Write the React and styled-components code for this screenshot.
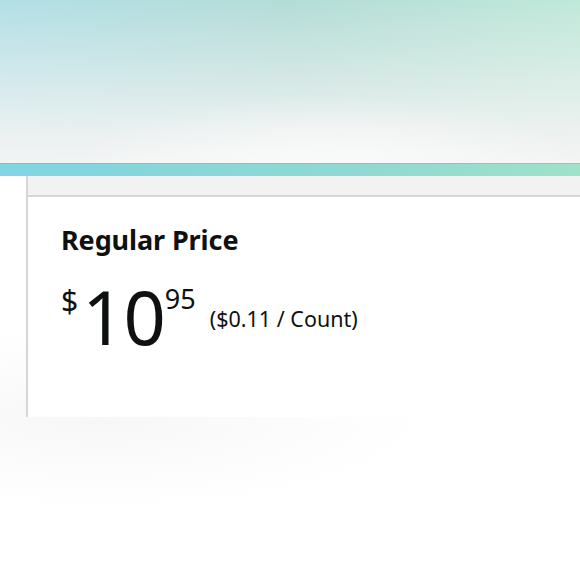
import styled, { createGlobalStyle } from "styled-components";

const Global = createGlobalStyle`
    html, body {
        margin: 0;
        padding: 0;
        background: #ffffff;
        font-family: "Noto Sans", "Open Sans", Arial, sans-serif;
    }
`;

const Page = styled.div`
    width: 580px;
    height: 580px;
    overflow: hidden;
    display: flex;
    flex-direction: column;
    background: radial-gradient(ellipse 330px 90px at 100px 418px, #f7f7f7 0%, #fcfcfc 60%, #ffffff 100%);
`;

const Hero = styled.div`
    height: 163px;
    flex-shrink: 0;
    background:
        radial-gradient(ellipse 260px 80px at 330px 175px, #fbfbfb 0%, rgba(251,251,251,0) 100%),
        linear-gradient(180deg, rgba(255,255,255,0) 0%, rgba(243,243,243,0.9) 85%, #f3f4f4 100%),
        linear-gradient(90deg, #b2dfe6 0%, #b4dcd7 50%, #c0e8d9 100%);
`;

const Band = styled.div`
    height: 13px;
    flex-shrink: 0;
    background: linear-gradient(90deg, #80d6e1 0%, #84d6dc 20%, #8fd9d3 60%, #9fe2ca 100%);
    box-shadow: inset 0 1px 0 rgba(90, 170, 170, 0.35);
`;

const Body = styled.div`
    display: flex;
    padding-left: 26px;
`;

const Card = styled.div`
    flex: 1;
    height: 241px;
    border-left: 2px solid #d6d6d6;
    background: #ffffff;
    display: flex;
    flex-direction: column;
`;

const CardTop = styled.div`
    height: 19px;
    background: #f2f2f2;
    border-bottom: 2px solid #d7d7d7;
`;

const Content = styled.div`
    padding: 26px 0 0 33px;
    color: #0f1111;
`;

const Title = styled.h2`
    margin: 0;
    font-size: 27px;
    font-weight: 700;
    line-height: 34px;
    letter-spacing: -0.1px;
`;

const PriceRow = styled.div`
    display: flex;
    align-items: flex-start;
    margin-top: 23px;
`;

const Symbol = styled.span`
    font-size: ${p => p.$size}px;
    line-height: 1;
    margin-top: ${p => p.$top}px;
    margin-left: ${p => p.$left || 0}px;
`;

const Whole = styled.span`
    font-size: 74px;
    line-height: 1;
    letter-spacing: -1px;
    margin-left: 4px;
`;

const Unit = styled.span`
    font-size: 21.5px;
    line-height: 1;
    margin-top: 28px;
    margin-left: 14px;
`;

export default function App() {
    return (
        <Page>
            <Global />
            <Hero />
            <Band />
            <Body>
                <Card>
                    <CardTop />
                    <Content>
                        <Title>Regular Price</Title>
                        <PriceRow>
                            <Symbol $size={30} $top={6}>$</Symbol>
                            <Whole>10</Whole>
                            <Symbol $size={27} $top={5} $left={0}>95</Symbol>
                            <Unit>($0.11 / Count)</Unit>
                        </PriceRow>
                    </Content>
                </Card>
            </Body>
        </Page>
    );
}
